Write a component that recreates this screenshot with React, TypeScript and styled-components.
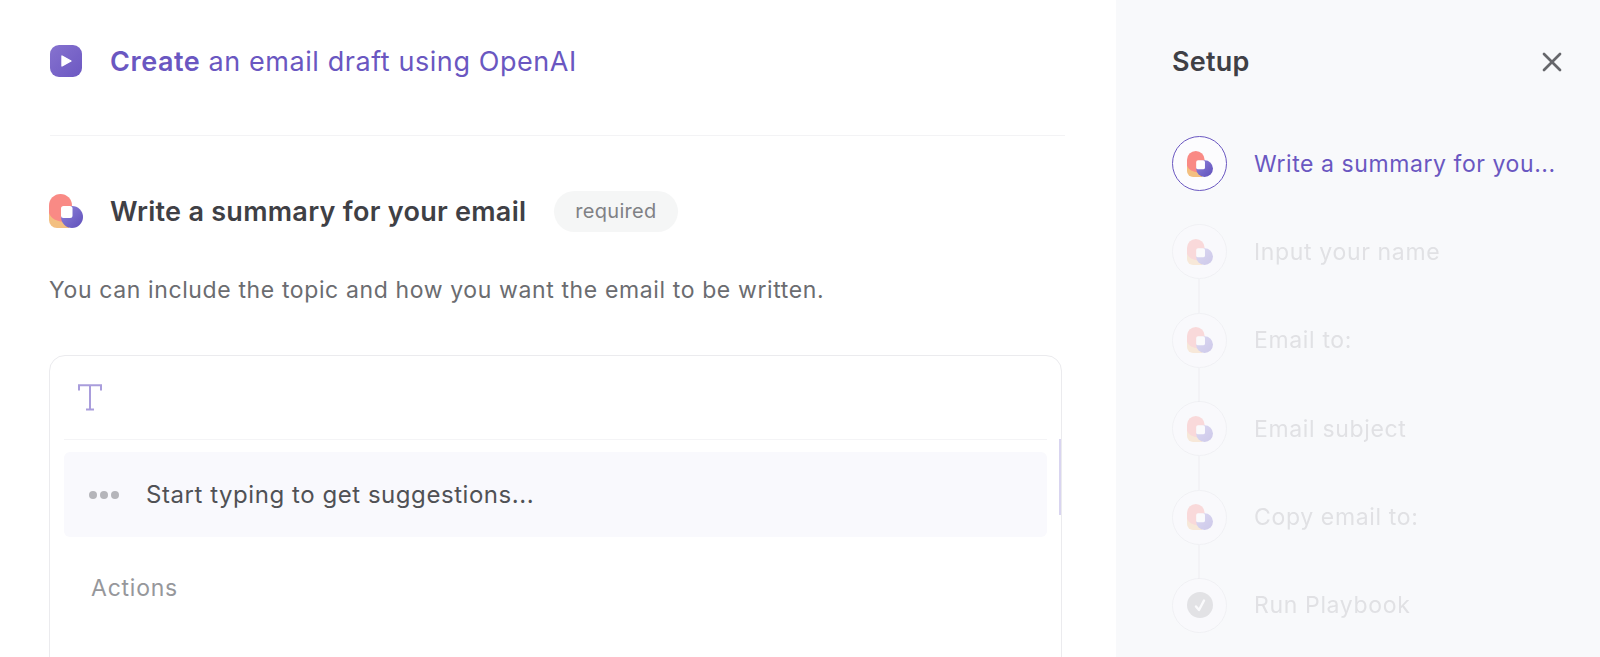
import React from 'react';
import styled, { createGlobalStyle } from 'styled-components';
import { X } from 'lucide-react';

const GlobalStyle = createGlobalStyle`
  html, body {
    margin: 0;
    padding: 0;
    background: #ffffff;
    font-family: 'Inter', 'Liberation Sans', sans-serif;
  }
`;

const Page = styled.div`
  display: flex;
  width: 1600px;
  height: 657px;
  overflow: hidden;
`;

const Main = styled.main`
  width: 1116px;
  flex-shrink: 0;
  padding: 0 51px 0 50px;
  box-sizing: border-box;
`;

const TitleBar = styled.header`
  display: flex;
  align-items: center;
  gap: 28px;
  height: 136px;
  padding-bottom: 13px;
  box-sizing: border-box;
  border-bottom: 1px solid #f3f3f5;
`;

const PlayBadge = styled.div`
  width: 32px;
  height: 32px;
  border-radius: 9px;
  background: linear-gradient(135deg, #8672cf, #6c58c2);
  display: flex;
  align-items: center;
  justify-content: center;
`;

const Title = styled.h1`
  margin: 0;
  font-size: 27px;
  font-weight: 400;
  letter-spacing: 0.57px;
  color: #6a57c1;

  strong {
    font-weight: 600;
  }
`;

const StepHeading = styled.div`
  display: flex;
  align-items: center;
  margin: 54px 0 0 -1px;
  height: 42px;
`;

const StepName = styled.h2`
  margin: 0 0 0 27px;
  font-size: 27px;
  font-weight: 600;
  letter-spacing: 0.28px;
  color: #3f4045;
`;

const RequiredPill = styled.span`
  margin-left: 28px;
  height: 41px;
  padding: 0 21px;
  border-radius: 21px;
  background: #f5f6f6;
  color: #808185;
  font-size: 20px;
  letter-spacing: 0.3px;
  display: flex;
  align-items: center;
`;

const Hint = styled.p`
  margin: 42px 0 0 -1px;
  font-size: 23px;
  line-height: 32px;
  letter-spacing: 0.62px;
  color: #6b6c70;
`;

const Card = styled.section`
  position: relative;
  margin: 49px 0 0 -1px;
  width: 1013px;
  height: 340px;
  border: 1px solid #ebebee;
  border-radius: 16px;
  padding: 0 14px;
  box-sizing: border-box;
`;

const Toolbar = styled.div`
  height: 83px;
  padding-left: 14px;
  display: flex;
  align-items: center;
  border-bottom: 1px solid #f4f4f6;
`;

const SuggestionRow = styled.div`
  display: flex;
  align-items: center;
  gap: 27px;
  margin-top: 12px;
  height: 85px;
  padding-left: 25px;
  border-radius: 6px;
  background: #f9f9fd;
`;

const Dots = styled.div`
  display: flex;
  gap: 3px;
`;

const Dot = styled.span`
  width: 8px;
  height: 8px;
  border-radius: 50%;
  background: #b5b5ba;
`;

const SuggestionText = styled.span`
  font-size: 24px;
  letter-spacing: 0.55px;
  color: #505155;
`;

const SectionLabel = styled.div`
  margin: 37px 0 0 27px;
  font-size: 23px;
  letter-spacing: 0.77px;
  color: #96979b;
`;

const ScrollThumb = styled.div`
  position: absolute;
  top: 83px;
  right: 0;
  width: 2px;
  height: 76px;
  background: #d9d5f0;
`;

const Sidebar = styled.aside`
  flex: 1;
  background: #f8f9fb;
  padding: 0 44px 0 56px;
  box-sizing: border-box;
`;

const SidebarHeader = styled.div`
  display: flex;
  align-items: center;
  justify-content: space-between;
  height: 123px;
`;

const SidebarTitle = styled.h2`
  margin: 0;
  font-size: 27px;
  font-weight: 600;
  letter-spacing: 0.2px;
  color: #3f4045;
`;

const CloseButton = styled.button`
  border: 0;
  padding: 0;
  margin-right: -12px;
  background: none;
  color: #66676b;
  display: flex;
`;

const StepList = styled.ol`
  list-style: none;
  margin: 0;
  padding: 0;
`;

const StepItem = styled.li<{ $active?: boolean; $linked?: boolean }>`
  position: relative;
  display: flex;
  align-items: center;
  gap: 28px;
  height: 55px;
  margin-top: ${({ $active }) => ($active ? '13px' : '0')};
  margin-bottom: 33.4px;
  opacity: ${({ $active }) => ($active ? 1 : 0.28)};

  ${({ $linked }) =>
    $linked &&
    `
    &::after {
      content: '';
      position: absolute;
      left: 26px;
      top: 55px;
      width: 2px;
      height: 34px;
      background: #e4e4ea;
    }
  `}
`;

const StepCircle = styled.div<{ $active?: boolean }>`
  width: 55px;
  height: 55px;
  flex-shrink: 0;
  border-radius: 50%;
  box-sizing: border-box;
  border: 1px solid ${({ $active }) => ($active ? '#6a57c1' : '#dcdce2')};
  background: #fcfcfe;
  display: flex;
  align-items: center;
  justify-content: center;
`;

const StepLabel = styled.span<{ $active?: boolean }>`
  margin-left: -1px;
  font-size: 23px;
  letter-spacing: ${({ $active }) => ($active ? '0.57px' : '0.65px')};
  white-space: nowrap;
  color: ${({ $active }) => ($active ? '#6a57c1' : '#a4a5aa')};
`;

const BlocksLogo: React.FC<{ size: number }> = ({ size }) => (
  <svg width={size} height={size} viewBox="0 0 34 34" aria-hidden="true">
    <defs>
      <linearGradient id="blockPurple" x1="0" y1="0" x2="1" y2="1">
        <stop offset="0" stopColor="#8f84da" />
        <stop offset="1" stopColor="#5f4fbb" />
      </linearGradient>
    </defs>
    <path d="M0 18 V26 a8 8 0 0 0 8 8 H20 V18 Z" fill="#f3bf80" />
    <path d="M0 11.5 a11.5 11.5 0 0 1 23 0 V16 L14 28 C8 27 2 25 0 19 Z" fill="#f98a85" />
    <circle cx="23" cy="23" r="11" fill="url(#blockPurple)" />
    <rect x="12" y="12" width="11.5" height="12" rx="2.5" fill="#ffffff" />
  </svg>
);

const CheckBadge: React.FC = () => (
  <svg width="26" height="26" viewBox="0 0 26 26" aria-hidden="true">
    <circle cx="13" cy="13" r="13" fill="#a9a9ae" />
    <path d="M9 14.5 L12 18 L17 8.5" fill="none" stroke="#ffffff" strokeWidth="2.4" strokeLinecap="round" strokeLinejoin="round" />
  </svg>
);

const SerifT: React.FC = () => (
  <svg width="24" height="27" viewBox="0 0 24 27" aria-hidden="true">
    <path
      d="M1 6.5 V1.2 H23 V6.5 M12 1.2 V25.5 M8 25.5 H16"
      fill="none"
      stroke="#a99ddc"
      strokeWidth="2"
    />
  </svg>
);

const steps = ['Input your name', 'Email to:', 'Email subject', 'Copy email to:'];

export default function App() {
  return (
    <Page>
      <GlobalStyle />
      <Main>
        <TitleBar>
          <PlayBadge>
            <svg width="14" height="14" viewBox="0 0 14 14" aria-hidden="true">
              <path d="M3 2 L12 7 L3 12 Z" fill="#ffffff" stroke="#ffffff" strokeWidth="1.4" strokeLinejoin="round" />
            </svg>
          </PlayBadge>
          <Title>
            <strong>Create</strong> an email draft using OpenAI
          </Title>
        </TitleBar>

        <StepHeading>
          <BlocksLogo size={34} />
          <StepName>Write a summary for your email</StepName>
          <RequiredPill>required</RequiredPill>
        </StepHeading>
        <Hint>You can include the topic and how you want the email to be written.</Hint>

        <Card>
          <Toolbar>
            <SerifT />
          </Toolbar>
          <SuggestionRow>
            <Dots>
              <Dot />
              <Dot />
              <Dot />
            </Dots>
            <SuggestionText>Start typing to get suggestions...</SuggestionText>
          </SuggestionRow>
          <SectionLabel>Actions</SectionLabel>
          <ScrollThumb />
        </Card>
      </Main>

      <Sidebar>
        <SidebarHeader>
          <SidebarTitle>Setup</SidebarTitle>
          <CloseButton aria-label="Close">
            <X size={32} strokeWidth={2} />
          </CloseButton>
        </SidebarHeader>
        <StepList>
          <StepItem $active>
            <StepCircle $active>
              <BlocksLogo size={26} />
            </StepCircle>
            <StepLabel $active>Write a summary for you...</StepLabel>
          </StepItem>
          {steps.map(step => (
            <StepItem key={step} $linked>
              <StepCircle>
                <BlocksLogo size={26} />
              </StepCircle>
              <StepLabel>{step}</StepLabel>
            </StepItem>
          ))}
          <StepItem>
            <StepCircle>
              <CheckBadge />
            </StepCircle>
            <StepLabel>Run Playbook</StepLabel>
          </StepItem>
        </StepList>
      </Sidebar>
    </Page>
  );
}
